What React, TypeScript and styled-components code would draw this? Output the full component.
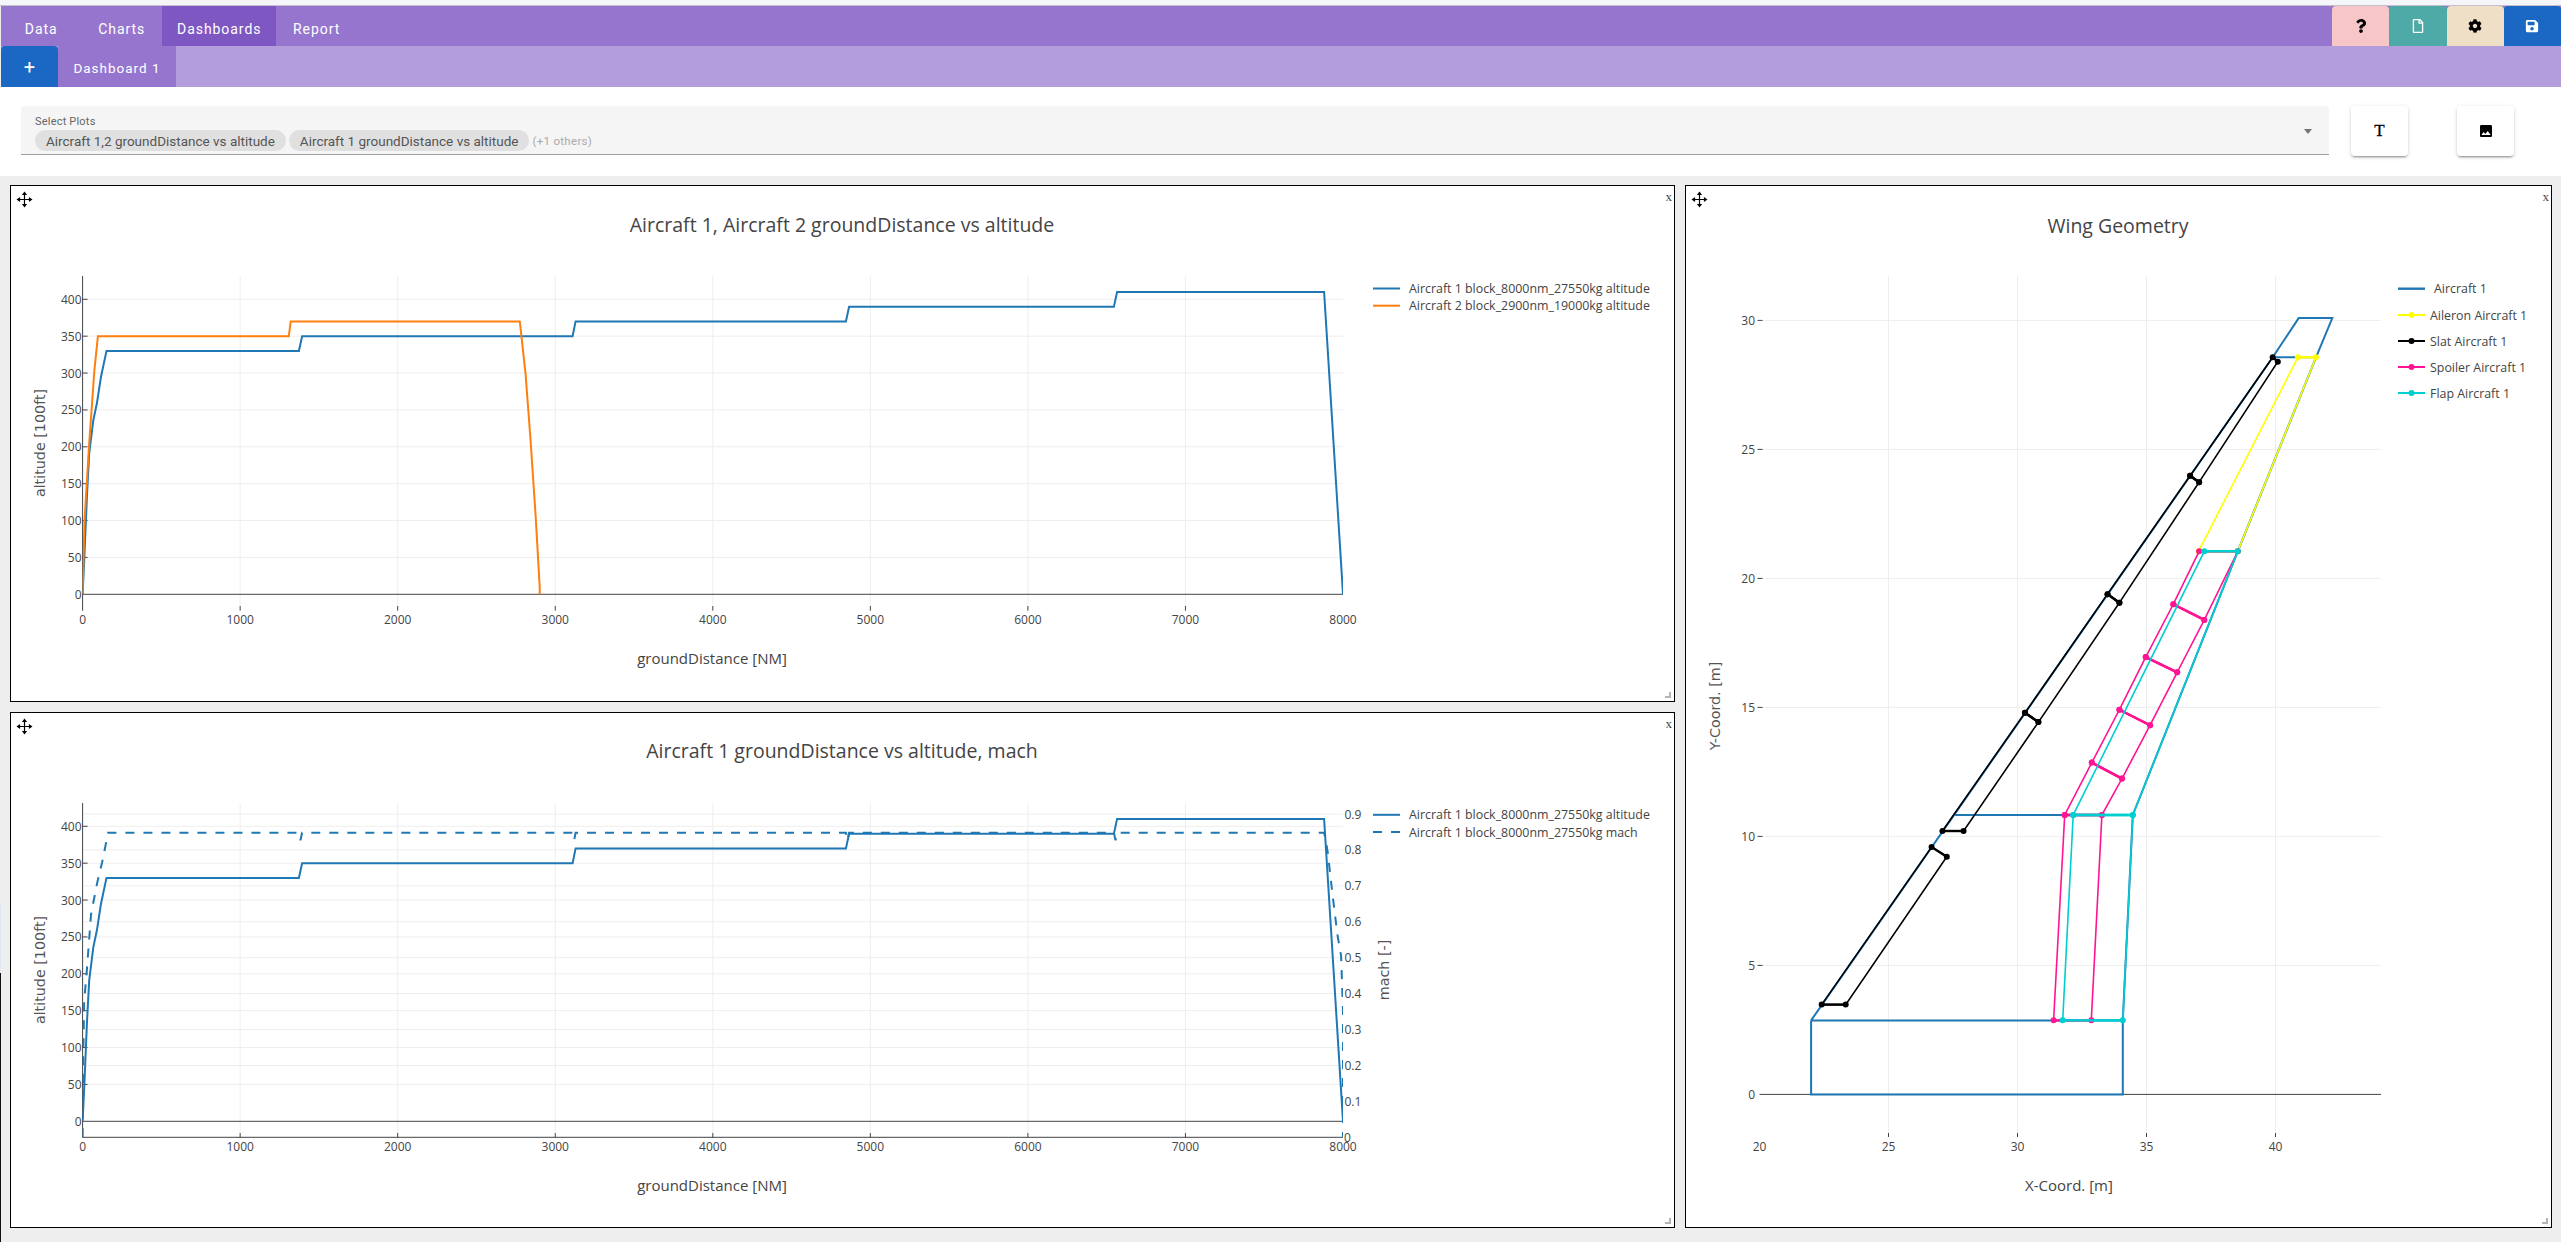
import React from "react";
import styled, { createGlobalStyle } from "styled-components";
import { FaCog, FaQuestion, FaRegFile, FaSave } from "react-icons/fa";
import { MdPhoto } from "react-icons/md";

type Pt = [number, number];

const GlobalStyle = createGlobalStyle`
  html, body {
    margin: 0;
    padding: 0;
    background: #eeeeee;
  }
  body {
    font-family: "Roboto", "Liberation Sans", sans-serif;
    overflow: hidden;
  }
`;

const Page = styled.div`
  position: relative;
  width: 2561px;
  height: 1242px;
  display: flex;
  flex-direction: column;
  background: #eeeeee;
`;

// sliver of another window that pokes in at the left screen edge
const EdgeSliver = styled.div<{ $top: number; $height: number; $color: string }>`
  position: absolute;
  left: 0;
  top: ${(p) => p.$top}px;
  width: 1px;
  height: ${(p) => p.$height}px;
  background: ${(p) => p.$color};
`;

const TopStrip = styled.div`
  height: 5px;
  background: #f5f6fa;
  border-bottom: 1px solid #c4c0cc;
`;

const NavBar = styled.div`
  height: 40px;
  margin-left: 1px;
  display: flex;
  justify-content: space-between;
  background: #9575cd;
`;

const NavTabs = styled.div`
  display: flex;
`;

const NavTab = styled.div<{ $active?: boolean }>`
  min-width: 80.5px;
  padding: 5px 15px 0;
  box-sizing: border-box;
  display: flex;
  align-items: center;
  justify-content: center;
  font-size: 14px;
  letter-spacing: 0.95px;
  color: #ffffff;
  background: ${(p) => (p.$active ? "#7e57c2" : "transparent")};
`;

const NavActions = styled.div`
  display: flex;
`;

const ActionButton = styled.div<{ $bg: string; $fg: string }>`
  width: 57.25px;
  display: flex;
  align-items: center;
  justify-content: center;
  font-size: 14px;
  background: ${(p) => p.$bg};
  color: ${(p) => p.$fg};
  border-radius: 4px 4px 0 0;
`;

const SubBar = styled.div`
  height: 41px;
  margin-left: 1px;
  display: flex;
  background: #b39ddb;
`;

const AddButton = styled.div`
  width: 57px;
  display: flex;
  align-items: center;
  justify-content: center;
  font-size: 20px;
  color: #ffffff;
  background: #1a68c4;
  border-radius: 4px 4px 0 0;
`;

const DashTab = styled.div`
  width: 118px;
  padding-top: 2px;
  box-sizing: border-box;
  display: flex;
  align-items: center;
  justify-content: center;
  font-size: 13.5px;
  letter-spacing: 1px;
  color: #ffffff;
  background: #9575cd;
`;

const Toolbar = styled.div`
  height: 89px;
  box-sizing: border-box;
  padding: 19px 47px 0 21px;
  display: flex;
  align-items: flex-start;
  background: #ffffff;
`;

const SelectField = styled.div`
  position: relative;
  width: 2308px;
  height: 49px;
  box-sizing: border-box;
  padding: 9px 14px 0;
  background: #f5f5f5;
  border-bottom: 1px solid #a0a0a0;
  border-radius: 4px 4px 0 0;
`;

const SelectLabel = styled.div`
  font-size: 11px;
  line-height: 14px;
  color: #666666;
  letter-spacing: 0.2px;
`;

const ChipRow = styled.div`
  margin-top: 1px;
  display: flex;
  align-items: center;
  gap: 3px;
`;

const Chip = styled.div`
  height: 21px;
  padding: 0 11px;
  display: flex;
  align-items: center;
  font-size: 13.5px;
  color: #555555;
  background: #e0e0e0;
  border-radius: 11px;
`;

const MoreNote = styled.span`
  font-size: 11.5px;
  color: #aaaaaa;
  letter-spacing: 0.3px;
`;

const Caret = styled.div`
  position: absolute;
  right: 17px;
  top: 23px;
  width: 0;
  height: 0;
  border-left: 4px solid transparent;
  border-right: 4px solid transparent;
  border-top: 5px solid #757575;
`;

const ToolButton = styled.div<{ $gap: number }>`
  width: 57px;
  height: 50px;
  margin-left: ${(p) => p.$gap}px;
  display: flex;
  align-items: center;
  justify-content: center;
  background: #ffffff;
  border-radius: 4px;
  box-shadow: 0 3px 1px -2px rgba(0, 0, 0, 0.2), 0 2px 2px 0 rgba(0, 0, 0, 0.14),
    0 1px 5px 0 rgba(0, 0, 0, 0.12);
`;

const TextGlyph = styled.span`
  font-family: "Liberation Serif", serif;
  font-size: 17px;
  font-weight: 400;
  color: #000000;
  -webkit-text-stroke: 0.3px #000000;
`;

const Board = styled.div`
  flex: 1;
  padding: 9px 9px 14px 10px;
  display: grid;
  grid-template-columns: 1665px 867px;
  grid-template-rows: 517px 516px;
  gap: 10px;
`;

const Panel = styled.div<{ $tall?: boolean }>`
  position: relative;
  box-sizing: border-box;
  background: #ffffff;
  border: 1px solid #000000;
  grid-row: ${(p) => (p.$tall ? "1 / span 2" : "auto")};
  grid-column: ${(p) => (p.$tall ? "2" : "1")};
`;

const MoveHandle = styled.svg`
  position: absolute;
  top: 5px;
  left: 5px;
  width: 17px;
  height: 17px;
`;

const CloseMark = styled.div`
  position: absolute;
  top: 4px;
  right: 2px;
  font-family: "Liberation Serif", serif;
  font-size: 13px;
  line-height: 14px;
  color: #444444;
`;

const ResizeMark = styled.div`
  position: absolute;
  right: 3px;
  bottom: 3px;
  width: 4px;
  height: 4px;
  border-right: 2px solid #b5b5b5;
  border-bottom: 2px solid #b5b5b5;
`;

const ChartSvg = styled.svg`
  display: block;
  width: 100%;
  height: 100%;
`;

const ChartTitle = styled.text`
  font-family: "Open Sans", "Liberation Sans", sans-serif;
  font-size: 19.5px;
  fill: #444444;
  text-anchor: middle;
  dominant-baseline: central;
`;

const AxisTitle = styled.text`
  font-family: "Open Sans", "Liberation Sans", sans-serif;
  font-size: 15px;
  fill: #444444;
  text-anchor: middle;
  dominant-baseline: central;
`;

const WideAxisTitle = styled(AxisTitle)`
  font-family: "DejaVu Sans", sans-serif;
  font-size: 14.3px;
  fill: #555555;
`;

const TickLabel = styled.text<{ $anchor: string }>`
  font-family: "Open Sans", "Liberation Sans", sans-serif;
  font-size: 12px;
  fill: #444444;
  text-anchor: ${(p) => p.$anchor};
  dominant-baseline: central;
`;

const LegendLabel = styled.text`
  font-family: "Open Sans", "Liberation Sans", sans-serif;
  font-size: 12.4px;
  fill: #444444;
  dominant-baseline: central;
`;

const BLUE = "#1f77b4";
const ORANGE = "#ff7f0e";
const GRID = "#eeeeee";
const AXIS = "#444444";

// page px of plot area, relative to the panel's inner corner
const X0 = 71.6;
const XK = 0.15755;
const Y0 = 408.3;
const YK = 0.7375;
const MACH0 = 424.3;
const MACHK = 359.2;

const distX = (d: number) => X0 + d * XK;
const altY = (a: number) => Y0 - a * YK;
const machY = (m: number) => MACH0 - m * MACHK;

const aircraft1: Pt[] = [
  [0, 0], [10, 45], [28, 135], [42, 191], [68, 236], [91, 259], [117, 295], [152, 330],
  [1373, 330], [1393, 350], [3110, 350], [3129, 370], [4845, 370], [4865, 390],
  [6546, 390], [6566, 410], [7880, 410], [8000, 0],
];

const aircraft2: Pt[] = [
  [0, 0], [12, 100], [42, 205], [60, 260], [75, 304], [97, 350], [1309, 350], [1321, 370],
  [2775, 370], [2811, 300], [2843, 210], [2876, 105], [2901, 10], [2901, 0],
];

const mach: Pt[] = [
  [0, 0], [3, 0.2], [10, 0.38], [27, 0.467], [53, 0.62], [92, 0.707], [124, 0.765], [162, 0.848],
  [1373, 0.848], [1383, 0.827], [1393, 0.848], [3110, 0.848], [3120, 0.827], [3129, 0.848],
  [4845, 0.848], [4855, 0.827], [4865, 0.848], [6546, 0.848], [6556, 0.827], [6566, 0.848],
  [7880, 0.848], [7890, 0.827], [7903, 0.794], [7935, 0.669], [7965, 0.563], [7988, 0.505],
  [8000, 0.351], [8000, 0],
];

const linePath = (pts: Pt[], fx: (v: number) => number, fy: (v: number) => number) =>
  pts.map(([a, b]) => `${fx(a).toFixed(1)},${fy(b).toFixed(1)}`).join(" ");

const range = (from: number, to: number, step: number) => {
  const out: number[] = [];
  for (let v = from; v <= to + 1e-6; v += step) out.push(v);
  return out;
};

const DistanceGrid: React.FC<{ axisLine?: boolean }> = ({ axisLine }) => (
  <>
    {range(1000, 7000, 1000).map((d) => (
      <line key={d} x1={distX(d)} x2={distX(d)} y1={90} y2={420} stroke={GRID} />
    ))}
    {range(50, 400, 50).map((a) => (
      <line key={a} x1={X0} x2={distX(8000)} y1={altY(a)} y2={altY(a)} stroke={GRID} />
    ))}
    <line x1={X0} x2={distX(8000)} y1={Y0} y2={Y0} stroke={AXIS} />
    <line x1={X0} x2={X0} y1={90} y2={424.7} stroke={AXIS} />
    {axisLine && <line x1={X0} x2={distX(8000)} y1={424.3} y2={424.3} stroke={AXIS} />}
    {range(1000, 7000, 1000).map((d) => (
      <line key={d} x1={distX(d)} x2={distX(d)} y1={420} y2={424.7} stroke={AXIS} />
    ))}
    {range(50, 400, 50).map((a) => (
      <line key={a} x1={X0} x2={X0 + 5} y1={altY(a)} y2={altY(a)} stroke={AXIS} />
    ))}
    {range(0, 8000, 1000).map((d) => (
      <TickLabel key={d} $anchor="middle" x={distX(d)} y={433}>
        {d}
      </TickLabel>
    ))}
    {range(0, 400, 50).map((a) => (
      <TickLabel key={a} $anchor="end" x={X0 - 1} y={altY(a)}>
        {a}
      </TickLabel>
    ))}
    <AxisTitle x={701} y={472}>
      groundDistance [NM]
    </AxisTitle>
    <WideAxisTitle x={29} y={257} transform="rotate(-90 29 257)">
      altitude [100ft]
    </WideAxisTitle>
  </>
);

const LegendRow: React.FC<{ y: number; color: string; label: string; dashed?: boolean }> = ({
  y,
  color,
  label,
  dashed,
}) => (
  <>
    <line x1={1362} x2={1389} y1={y} y2={y} stroke={color} strokeWidth={2} strokeDasharray={dashed ? "9 9" : undefined} />
    <LegendLabel x={1398} y={y}>
      {label}
    </LegendLabel>
  </>
);

const AltitudeChart: React.FC = () => (
  <ChartSvg>
    <defs>
      <clipPath id="plotA">
        <rect x={X0} y={90} width={XK * 8000} height={335} />
      </clipPath>
    </defs>
    <ChartTitle x={831} y={38.5}>
      Aircraft 1, Aircraft 2 groundDistance vs altitude
    </ChartTitle>
    <DistanceGrid />
    <g clipPath="url(#plotA)" fill="none" strokeWidth={2}>
      <polyline points={linePath(aircraft1, distX, altY)} stroke={BLUE} />
      <polyline points={linePath(aircraft2, distX, altY)} stroke={ORANGE} />
    </g>
    <LegendRow y={102.5} color={BLUE} label="Aircraft 1 block_8000nm_27550kg altitude" />
    <LegendRow y={119.7} color={ORANGE} label="Aircraft 2 block_2900nm_19000kg altitude" />
  </ChartSvg>
);

const MachChart: React.FC = () => (
  <ChartSvg>
    <defs>
      <clipPath id="plotB">
        <rect x={X0} y={89} width={XK * 8000} height={336} />
      </clipPath>
    </defs>
    <ChartTitle x={831} y={37.8}>
      Aircraft 1 groundDistance vs altitude, mach
    </ChartTitle>
    {range(0.2, 0.9, 0.1).map((m) => (
      <line key={m} x1={X0} x2={distX(8000)} y1={machY(m)} y2={machY(m)} stroke={GRID} />
    ))}
    <DistanceGrid axisLine />
    <g clipPath="url(#plotB)" fill="none" strokeWidth={2}>
      <polyline points={linePath(aircraft1, distX, altY)} stroke={BLUE} />
      <polyline points={linePath(mach, distX, machY)} stroke={BLUE} strokeDasharray="9 9" />
    </g>
    {range(0, 0.9, 0.1).map((m) => (
      <TickLabel key={m} $anchor="start" x={X0 + XK * 8000 + (m < 0.05 ? 1 : 1.5)} y={machY(m)}>
        {m < 0.05 ? "0" : m.toFixed(1)}
      </TickLabel>
    ))}
    <WideAxisTitle x={1373} y={257} transform="rotate(-90 1373 257)">
      mach [-]
    </WideAxisTitle>
    <LegendRow y={101.8} color={BLUE} label="Aircraft 1 block_8000nm_27550kg altitude" />
    <LegendRow y={119} color={BLUE} dashed label="Aircraft 1 block_8000nm_27550kg mach" />
  </ChartSvg>
);

// wing chart, 1:1 metres to px
const WK = 25.8;
const wingX = (v: number) => 73.5 + (v - 20) * WK;
const wingY = (v: number) => 908.4 - v * WK;

const outline: Pt[][] = [
  [[22, 2.87], [22, 0], [34.08, 0], [34.08, 2.87], [34.47, 10.83], [38.54, 21.05], [41.57, 28.57], [42.2, 30.09], [40.9, 30.09], [39.89, 28.57], [22, 2.87]],
  [[22, 2.87], [34.08, 2.87]],
  [[27.58, 10.83], [34.47, 10.83]],
  [[37, 21.05], [38.54, 21.05]],
  [[39.89, 28.57], [41.57, 28.57]],
];

const slats: Pt[][] = [
  [[22.41, 3.48], [23.34, 3.48], [27.26, 9.21], [26.67, 9.59]],
  [[27.09, 10.21], [27.91, 10.21], [30.81, 14.43], [30.29, 14.79]],
  [[30.29, 14.79], [30.81, 14.43], [33.95, 19.06], [33.49, 19.39]],
  [[33.49, 19.39], [33.95, 19.06], [37.04, 23.73], [36.69, 23.98]],
  [[36.69, 23.98], [37.04, 23.73], [40.09, 28.4], [39.89, 28.57]],
];

const aileron: Pt[][] = [[[40.87, 28.57], [41.57, 28.57], [38.54, 21.05], [37.02, 21.05]]];

const spoilers: Pt[][] = [
  [[31.4, 2.87], [32.86, 2.87], [33.27, 10.83], [31.83, 10.83]],
  [[31.83, 10.83], [33.27, 10.83], [34.05, 12.24], [32.88, 12.86]],
  [[32.88, 12.86], [34.05, 12.24], [35.14, 14.31], [33.95, 14.91]],
  [[33.95, 14.91], [35.14, 14.31], [36.19, 16.36], [34.97, 16.95]],
  [[34.97, 16.95], [36.19, 16.36], [37.24, 18.39], [36.04, 19]],
  [[36.04, 19], [37.24, 18.39], [38.54, 21.05], [37.04, 21.05]],
];

const flaps: Pt[][] = [
  [[31.75, 2.87], [34.08, 2.87], [34.47, 10.83], [32.16, 10.83]],
  [[32.16, 10.83], [34.47, 10.83], [38.54, 21.05], [37.24, 21.05]],
];

const MarkedSegment: React.FC<{ pts: Pt[]; color: string; r?: number }> = ({ pts, color, r = 3 }) => (
  <>
    <polygon points={linePath(pts, wingX, wingY)} fill="none" stroke={color} strokeWidth={1.6} />
    <polyline points={linePath([pts[0], pts[1]], wingX, wingY)} fill="none" stroke={color} strokeWidth={2.4} />
    <polyline points={linePath([pts[2], pts[3]], wingX, wingY)} fill="none" stroke={color} strokeWidth={2.4} />
    {pts.map(([a, b], i) => (
      <circle key={i} cx={wingX(a)} cy={wingY(b)} r={r} fill={color} />
    ))}
  </>
);

const wingLegend: { label: string; color: string }[] = [
  { label: "Aileron Aircraft 1", color: "#ffff00" },
  { label: "Slat Aircraft 1", color: "#000000" },
  { label: "Spoiler Aircraft 1", color: "#ff1493" },
  { label: "Flap Aircraft 1", color: "#00ced1" },
];

const WingChart: React.FC = () => (
  <ChartSvg>
    <ChartTitle x={432} y={39}>
      Wing Geometry
    </ChartTitle>
    {[25, 30, 35, 40].map((v) => (
      <line key={v} x1={wingX(v)} x2={wingX(v)} y1={90} y2={947} stroke={GRID} />
    ))}
    {[5, 10, 15, 20, 25, 30].map((v) => (
      <line key={v} x1={73.5} x2={695} y1={wingY(v)} y2={wingY(v)} stroke={GRID} />
    ))}
    <line x1={73.5} x2={695} y1={wingY(0)} y2={wingY(0)} stroke={AXIS} />
    {[25, 30, 35, 40].map((v) => (
      <line key={v} x1={wingX(v)} x2={wingX(v)} y1={947} y2={951} stroke={AXIS} />
    ))}
    {[5, 10, 15, 20, 25, 30].map((v) => (
      <line key={v} x1={71.5} x2={76.5} y1={wingY(v)} y2={wingY(v)} stroke={AXIS} />
    ))}
    {[20, 25, 30, 35, 40].map((v) => (
      <TickLabel key={v} $anchor="middle" x={wingX(v)} y={960}>
        {v}
      </TickLabel>
    ))}
    {[0, 5, 10, 15, 20, 25, 30].map((v) => (
      <TickLabel key={v} $anchor="end" x={69} y={wingY(v)}>
        {v}
      </TickLabel>
    ))}
    <AxisTitle x={383} y={999}>
      X-Coord. [m]
    </AxisTitle>
    <WideAxisTitle x={29} y={520} transform="rotate(-90 29 520)">
      Y-Coord. [m]
    </WideAxisTitle>

    {outline.map((pts, i) => (
      <polyline key={i} points={linePath(pts, wingX, wingY)} fill="none" stroke={BLUE} strokeWidth={2} />
    ))}
    {aileron.map((pts, i) => (
      <MarkedSegment key={i} pts={pts} color="#ffff00" />
    ))}
    {slats.map((pts, i) => (
      <MarkedSegment key={i} pts={pts} color="#000000" />
    ))}
    {spoilers.map((pts, i) => (
      <MarkedSegment key={i} pts={pts} color="#ff1493" />
    ))}
    {flaps.map((pts, i) => (
      <MarkedSegment key={i} pts={pts} color="#00ced1" />
    ))}

    <line x1={712} x2={739} y1={102.7} y2={102.7} stroke={BLUE} strokeWidth={2.4} />
    <LegendLabel x={748} y={102.7}>
      Aircraft 1
    </LegendLabel>
    {wingLegend.map((row, i) => {
      const y = 129 + i * 26;
      return (
        <React.Fragment key={row.label}>
          <line x1={712} x2={739} y1={y} y2={y} stroke={row.color} strokeWidth={2} />
          <circle cx={725.5} cy={y} r={3} fill={row.color} />
          <LegendLabel x={744} y={y}>
            {row.label}
          </LegendLabel>
        </React.Fragment>
      );
    })}
  </ChartSvg>
);

const MoveIcon: React.FC = () => (
  <MoveHandle viewBox="0 0 17 17">
    <path d="M7.9 4h1.2v9H7.9z M4 7.9h9v1.2H4z" fill="#000000" />
    <path d="M8.5 0.5l2.6 3.6H5.9z M8.5 16.5l-2.6-3.6h5.2z M0.5 8.5l3.6-2.6v5.2z M16.5 8.5l-3.6 2.6V5.9z" fill="#000000" />
  </MoveHandle>
);

const PanelChrome: React.FC = () => (
  <>
    <MoveIcon />
    <CloseMark>x</CloseMark>
    <ResizeMark />
  </>
);

const App: React.FC = () => (
  <Page>
    <GlobalStyle />
    <TopStrip />
    <NavBar>
      <NavTabs>
        <NavTab>Data</NavTab>
        <NavTab>Charts</NavTab>
        <NavTab $active>Dashboards</NavTab>
        <NavTab>Report</NavTab>
      </NavTabs>
      <NavActions>
        <ActionButton $bg="#f7c7c7" $fg="#000000">
          <FaQuestion />
        </ActionButton>
        <ActionButton $bg="#4daaa7" $fg="#ffffff">
          <FaRegFile />
        </ActionButton>
        <ActionButton $bg="#f0dfc7" $fg="#000000">
          <FaCog />
        </ActionButton>
        <ActionButton $bg="#1a68c4" $fg="#ffffff">
          <FaSave />
        </ActionButton>
      </NavActions>
    </NavBar>
    <SubBar>
      <AddButton>+</AddButton>
      <DashTab>Dashboard 1</DashTab>
    </SubBar>
    <Toolbar>
      <SelectField>
        <SelectLabel>Select Plots</SelectLabel>
        <ChipRow>
          <Chip>Aircraft 1,2 groundDistance vs altitude</Chip>
          <Chip>Aircraft 1 groundDistance vs altitude</Chip>
          <MoreNote>(+1 others)</MoreNote>
        </ChipRow>
        <Caret />
      </SelectField>
      <ToolButton $gap={22}>
        <TextGlyph>T</TextGlyph>
      </ToolButton>
      <ToolButton $gap={49}>
        <MdPhoto size={16} color="#000000" />
      </ToolButton>
    </Toolbar>
    <Board>
      <Panel>
        <PanelChrome />
        <AltitudeChart />
      </Panel>
      <Panel $tall>
        <PanelChrome />
        <WingChart />
      </Panel>
      <Panel>
        <PanelChrome />
        <MachChart />
      </Panel>
    </Board>
    <EdgeSliver $top={904} $height={69} $color="#dfe8f2" />
    <EdgeSliver $top={973} $height={269} $color="#111111" />
  </Page>
);

export default App;
